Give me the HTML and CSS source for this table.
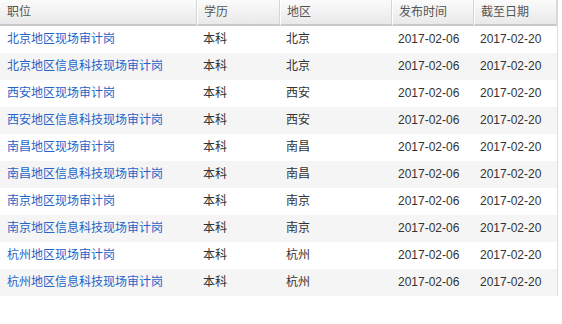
FILE: index.html
```html
<!DOCTYPE html>
<html lang="zh-CN">
<head>
<meta charset="utf-8">
<title>职位列表</title>
<link rel="stylesheet" href="styles.css">
</head>
<body>
<table class="jobs">
  <colgroup>
    <col class="c1"><col class="c2"><col class="c3"><col class="c4"><col class="c5">
  </colgroup>
  <thead>
    <tr><th>职位</th><th>学历</th><th>地区</th><th>发布时间</th><th>截至日期</th></tr>
  </thead>
  <tbody>
    <tr><td><a href="#">北京地区现场审计岗</a></td><td>本科</td><td>北京</td><td>2017-02-06</td><td>2017-02-20</td></tr>
    <tr><td><a href="#">北京地区信息科技现场审计岗</a></td><td>本科</td><td>北京</td><td>2017-02-06</td><td>2017-02-20</td></tr>
    <tr><td><a href="#">西安地区现场审计岗</a></td><td>本科</td><td>西安</td><td>2017-02-06</td><td>2017-02-20</td></tr>
    <tr><td><a href="#">西安地区信息科技现场审计岗</a></td><td>本科</td><td>西安</td><td>2017-02-06</td><td>2017-02-20</td></tr>
    <tr><td><a href="#">南昌地区现场审计岗</a></td><td>本科</td><td>南昌</td><td>2017-02-06</td><td>2017-02-20</td></tr>
    <tr><td><a href="#">南昌地区信息科技现场审计岗</a></td><td>本科</td><td>南昌</td><td>2017-02-06</td><td>2017-02-20</td></tr>
    <tr><td><a href="#">南京地区现场审计岗</a></td><td>本科</td><td>南京</td><td>2017-02-06</td><td>2017-02-20</td></tr>
    <tr><td><a href="#">南京地区信息科技现场审计岗</a></td><td>本科</td><td>南京</td><td>2017-02-06</td><td>2017-02-20</td></tr>
    <tr><td><a href="#">杭州地区现场审计岗</a></td><td>本科</td><td>杭州</td><td>2017-02-06</td><td>2017-02-20</td></tr>
    <tr><td><a href="#">杭州地区信息科技现场审计岗</a></td><td>本科</td><td>杭州</td><td>2017-02-06</td><td>2017-02-20</td></tr>
  </tbody>
</table>
</body>
</html>
```
FILE: styles.css
```css
html, body {
  margin: 0;
  padding: 0;
  background: #fff;
}
body {
  font-family: "Liberation Sans", "Noto Sans CJK SC", sans-serif;
  font-size: 12px;
  color: #333;
}
.jobs {
  width: 558px;
  border-collapse: separate;
  border-spacing: 0;
  table-layout: fixed;
  border-right: 1px solid #dcdcdc;
}
.c1 { width: 197px; }
.c2 { width: 83px; }
.c3 { width: 112px; }
.c4 { width: 82px; }
.c5 { width: 83px; }
.jobs th {
  height: 24px;
  padding: 0 0 0 6px;
  text-align: left;
  font-weight: normal;
  color: #555;
  background: linear-gradient(#fbfbfb, #e9e9e9);
  border-bottom: 2px solid #c8c8c8;
  border-left: 1px solid #fff;
  border-right: 1px solid #d6d6d6;
  line-height: 24px;
}
.jobs th:first-child {
  border-left: none;
  padding-left: 7px;
}
.jobs td {
  height: 27px;
  padding: 0 0 0 6px;
  line-height: 27px;
  white-space: nowrap;
}
.jobs td:first-child {
  padding-left: 7px;
}
.jobs tbody tr:nth-child(even) td {
  background: #f5f5f5;
}
.jobs a {
  color: #2463c8;
  text-decoration: none;
}
```
